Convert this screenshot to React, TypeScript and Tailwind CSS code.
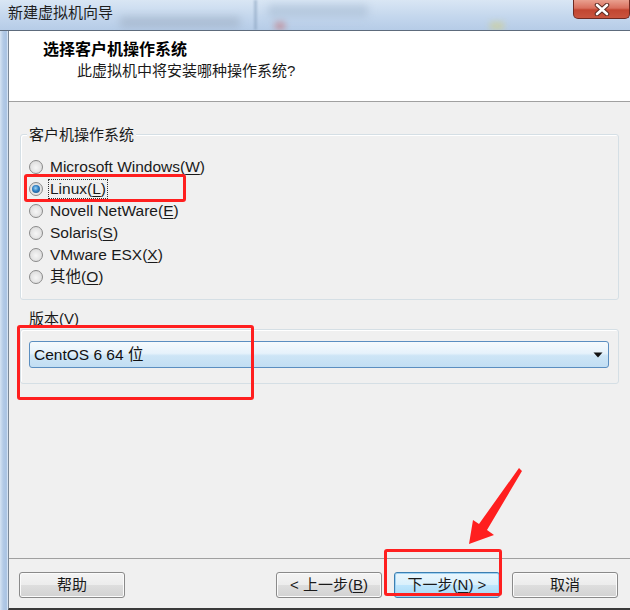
import React from "react";

const F = "font-['Liberation_Sans','Noto_Sans_CJK_SC',sans-serif]";

function Mn({ pre, k, post }: { pre: string; k: string; post: string }) {
  return (
    <>
      {pre}
      <span className="underline underline-offset-2">{k}</span>
      {post}
    </>
  );
}

function Radio({ checked }: { checked?: boolean }) {
  return (
    <span className="w-[14px] h-[14px] rounded-full border border-[#8a8a8a] bg-[radial-gradient(circle_at_50%_55%,#f6f6f6_0%,#e2e2e2_60%,#cfcfcf_100%)] flex items-center justify-center shrink-0">
      {checked && (
        <span className="w-[8px] h-[8px] rounded-full bg-[radial-gradient(circle_at_45%_40%,#9fd6f7_0%,#2f7fc2_45%,#124a82_100%)]" />
      )}
    </span>
  );
}

function Btn({ children, primary }: { children: React.ReactNode; primary?: boolean }) {
  return (
    <div
      className={
        "w-[106px] h-[26px] rounded-[3px] border flex items-center justify-center text-[15px] text-[#1a1a1a] " +
        (primary
          ? "border-[#3c7fb1] bg-[linear-gradient(180deg,#eaf6fd_0%,#d9f0fc_50%,#bee6fd_50%,#a7d9f5_100%)] shadow-[inset_0_0_0_1px_#9fd2f3]"
          : "border-[#8a8a8a] bg-[linear-gradient(180deg,#f4f4f4_0%,#ececec_50%,#dedede_50%,#d2d2d2_100%)] shadow-[inset_0_0_0_1px_#fbfbfb]")
      }
    >
      {children}
    </div>
  );
}

export default function App() {
  const radios: { pre: string; k: string; post: string; checked?: boolean }[] = [
    { pre: "Microsoft Windows(", k: "W", post: ")" },
    { pre: "Linux(", k: "L", post: ")", checked: true },
    { pre: "Novell NetWare(", k: "E", post: ")" },
    { pre: "Solaris(", k: "S", post: ")" },
    { pre: "VMware ESX(", k: "X", post: ")" },
    { pre: "其他(", k: "O", post: ")" },
  ];
  return (
    <div className={"relative w-[630px] h-[610px] overflow-hidden flex flex-col bg-[#f0f0f0] " + F}>
      {/* title bar */}
      <div className="relative h-[31px] shrink-0 border-b border-[#5d6b7c] bg-[linear-gradient(180deg,#d9e6f4_0%,#c4d7ed_55%,#b6cce7_100%)] flex items-start justify-between overflow-hidden">
        {/* blurred glass background */}
        <div className="absolute left-[120px] top-[17px] w-[120px] h-[10px] bg-[#8a98aa] opacity-40 blur-[4px]" />
        <div className="absolute left-[254px] top-0 w-[3px] h-[30px] bg-[#8ea6c2] opacity-60 blur-[1px]" />
        <div className="absolute left-[268px] top-[5px] w-[100px] h-[12px] bg-[#9fb4cc] opacity-50 blur-[4px]" />
        <div className="absolute left-[275px] top-[22px] w-[10px] h-[8px] bg-[#c86060] opacity-50 blur-[3px]" />
        <div className="absolute left-[490px] top-[22px] w-[14px] h-[8px] bg-[#d8d070] opacity-50 blur-[3px]" />
        <div className="relative pl-[8px] pt-[3px] leading-[20px] text-[15px] text-[#1e1e1e]">新建虚拟机向导</div>
        <div className="relative w-[57px] h-[19px] rounded-b-[5px] border border-t-0 border-[#6e2a22] bg-[linear-gradient(180deg,#e9a08f_0%,#d9705e_45%,#c24631_55%,#c9553f_100%)] flex items-center justify-center">
          <svg width="16" height="13" viewBox="0 0 16 13">
            <path d="M3 2 L13 11 M13 2 L3 11" stroke="#5a2a22" strokeWidth="4.5" strokeLinecap="round" />
            <path d="M3 2 L13 11 M13 2 L3 11" stroke="#ffffff" strokeWidth="2.6" strokeLinecap="round" />
          </svg>
        </div>
      </div>

      <div className="flex-1 flex">
        {/* left frame */}
        <div className="w-[8px] shrink-0 bg-[linear-gradient(90deg,#d5e3f3_0%,#b3cae6_40%,#a9c3e3_80%,#e8f0f9_100%)]" />
        {/* content */}
        <div className="flex-1 flex flex-col border-l border-[#7a8796] border-b-2 border-b-[#3a3a3a]">
          {/* header */}
          <div className="h-[71px] shrink-0 bg-white border-b border-[#a0a0a0] pl-[34px] pt-[8px]">
            <div className="leading-[22px] text-[16px] font-bold text-black">选择客户机操作系统</div>
            <div className="pl-[34px] leading-[20px] text-[15px] text-[#1a1a1a]">此虚拟机中将安装哪种操作系统?</div>
          </div>

          {/* body */}
          <div className="flex-1 flex flex-col px-[11px] pr-[11px]">
            {/* group 1 */}
            <div className="relative mt-[32px] border border-[#d5dfe5] rounded-[3px] shadow-[inset_1px_1px_0_#ffffff] pt-[21px] pb-[11px] pl-[8px]">
              <span className="absolute left-[6px] -top-[10px] px-[2px] leading-[20px] text-[15px] text-[#1a1a1a] bg-[#f0f0f0]">
                客户机操作系统
              </span>
              {radios.map((r, i) => (
                <div key={i} className="h-[22px] flex items-center gap-[5px] text-[15.5px] text-[#1a1a1a]">
                  <Radio checked={r.checked} />
                  <span
                    className={
                      "leading-[18px] border px-[1px] " +
                      (r.checked ? "border-dotted border-[#333]" : "border-transparent")
                    }
                  >
                    <Mn pre={r.pre} k={r.k} post={r.post} />
                  </span>
                </div>
              ))}
            </div>

            {/* group 2 */}
            <div className="relative mt-[29px] border border-[#d5dfe5] rounded-[3px] shadow-[inset_1px_1px_0_#ffffff] pt-[11px] pb-[15px] pl-[8px] pr-[9px]">
              <span className="absolute left-[6px] -top-[21px] px-[2px] leading-[20px] text-[15px] text-[#1a1a1a] bg-[#f0f0f0]">
                <Mn pre="版本(" k="V" post=")" />
              </span>
              <div className="h-[27px] rounded-[3px] border border-[#5b8ec0] bg-[linear-gradient(180deg,#f5fafd_0%,#e6f2fb_45%,#cde5f6_55%,#c2def3_100%)] flex items-center justify-between pl-[4px] pr-[4px]">
                <span className="text-[15.5px] leading-[20px] text-[#111]">CentOS 6 64 位</span>
                <svg width="10" height="6" viewBox="0 0 10 6" className="mr-[1px]">
                  <path d="M0.5 0.5 H9.5 L5 5.5 Z" fill="#111" />
                </svg>
              </div>
            </div>

            <div className="flex-1" />
          </div>

          {/* bottom */}
          <div className="shrink-0 border-t border-[#a0a0a0] pt-[13px] pb-[10px] flex items-center pl-[10px] pr-[12px] gap-[12px]">
            <Btn>帮助</Btn>
            <div className="flex-1" />
            <Btn>
              &lt; 上一步(<span className="underline underline-offset-2">B</span>)
            </Btn>
            <Btn primary>
              下一步(<span className="underline underline-offset-2">N</span>) &gt;
            </Btn>
            <Btn>取消</Btn>
          </div>
        </div>
      </div>

      {/* red annotations */}
      <div className="absolute left-[24px] top-[174px] w-[162px] h-[28px] border-[3px] border-[#ff1f1f] rounded-[3px] pointer-events-none" />
      <div className="absolute left-[17px] top-[325px] w-[237px] h-[75px] border-[3px] border-[#ff1f1f] rounded-[3px] pointer-events-none" />
      <div className="absolute left-[384px] top-[549px] w-[118px] h-[47px] border-[3px] border-[#ff1f1f] rounded-[3px] pointer-events-none" />
      <svg className="absolute left-0 top-0 pointer-events-none" width="630" height="610" viewBox="0 0 630 610">
        <polygon points="469,544 473,520 479,524 519,468 522,471 487,530 494,535" fill="#ff1f1f" />
      </svg>
    </div>
  );
}
